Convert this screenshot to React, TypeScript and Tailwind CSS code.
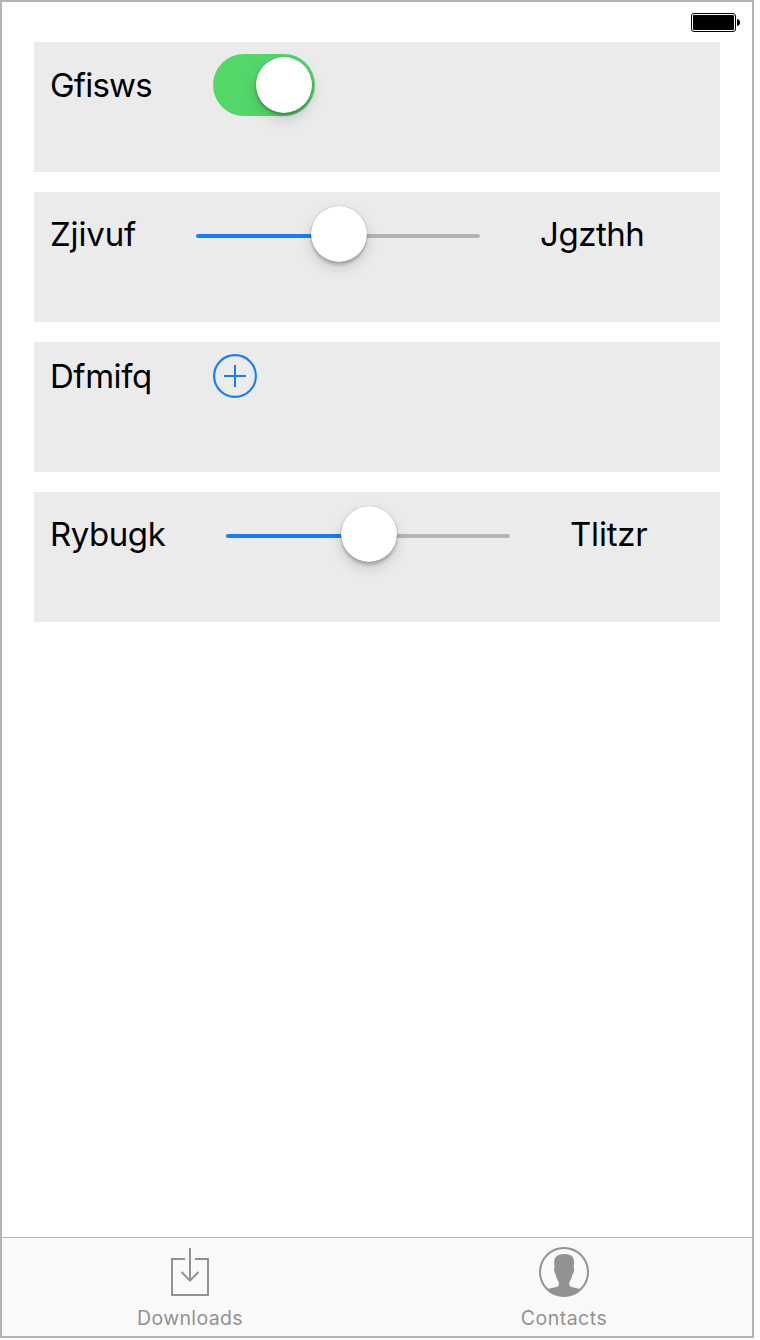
import React from "react";

const labelText = "block whitespace-nowrap text-[33px] leading-[40px] text-black";

function Battery() {
  return (
    <svg width="50" height="20" viewBox="0 0 50 20" aria-label="Battery full">
      <rect x="0.5" y="0.5" width="44" height="18" rx="2.5" fill="none" stroke="#000" />
      <rect x="2" y="2" width="41" height="15" rx="1" fill="#000" />
      <path d="M46 6c2 .3 3 1.500 3 3.500s-1 3.200-3 3.500z" fill="#000" />
    </svg>
  );
}

function Card({ children }: { children: React.ReactNode }) {
  return <section className="flex h-[130px] w-[686px] items-start bg-[#ebebeb] pl-4">{children}</section>;
}

function Slider() {
  return (
    <div className="mt-[13px] flex h-[58px] w-[284px] items-center">
      <div className="mt-1 h-1 w-[116px] rounded-l-full bg-[#157efb]" />
      <div className="relative -mx-px size-14 shrink-0 rounded-full bg-white shadow-[0_0_1px_rgba(0,0,0,0.4),0_3px_3px_rgba(0,0,0,0.2),0_6px_13px_rgba(0,0,0,0.15)]" />
      <div className="mt-1 h-1 w-[114px] rounded-r-full bg-[#b4b4b4]" />
    </div>
  );
}

function DownloadIcon() {
  return (
    <svg width="50" height="50" viewBox="0 0 50 50" fill="none" stroke="#929292" strokeWidth="2">
      <path d="M20 12H7v36h36V12H30M25 1v33M16.500 25l8.500 8.600L33.500 25" />
    </svg>
  );
}

function ContactIcon() {
  return (
    <svg width="50" height="50" viewBox="0 0 50 50">
      <circle cx="25" cy="25" r="24" fill="none" stroke="#929292" strokeWidth="2" />
      <path
        d="M8 42.300C12 41 17 40.500 19 39.300C20 38.600 19.900 36 19.500 34.300C18.100 32.800 17.200 30.500 16.800 27.700C15.600 27 14.700 22.300 15.300 20.300L15.700 20C15 16.500 14.800 13 16.500 10.500C18 8 21.500 7 25.500 7C30 7 33 8.500 34.300 11C35.500 13.500 35 17 34.500 20L35 20.300C35.500 22.300 34.700 27 33.300 27.700C32.900 30.500 32 32.800 30.600 34.300C30.200 36 30.100 38.600 31 39.300C33 40.500 38 41 42 42.300C38 47 32 49 25 49S12 47 8 42.300Z"
        fill="#929292"
      />
    </svg>
  );
}

export default function App() {
  return (
    <div className="h-[1340px] w-[760px] bg-white font-['Inter',sans-serif]">
      <div className="flex h-[1338px] w-[754px] flex-col border-2 border-[#b3b3b3] bg-white">
        <header className="flex h-10 shrink-0 justify-end pr-[11px] pt-[11px]">
          <Battery />
        </header>
        <main className="flex flex-1 flex-col gap-5 pl-8">
          <Card>
            <span className={`${labelText} mt-[23px] w-[163px] tracking-[-0.8px]`}>Gfisws</span>
            <div className="mt-3 flex h-[62px] w-[102px] items-center justify-end rounded-full bg-[#53d769] pr-[3px]">
              <div className="size-14 rounded-full bg-white shadow-[0_0_1px_rgba(0,0,0,0.2),0_2px_3px_rgba(0,0,0,0.28),0_6px_14px_rgba(0,0,0,0.16)]" />
            </div>
          </Card>
          <Card>
            <span className={`${labelText} mt-[22px] w-[146px] tracking-[-0.15px]`}>Zjivuf</span>
            <Slider />
            <span className={`${labelText} ml-[60px] mt-[22px] tracking-[-0.45px]`}>Jgzthh</span>
          </Card>
          <Card>
            <span className={`${labelText} mt-[14px] w-[163px] tracking-[-0.45px]`}>Dfmifq</span>
            <svg className="mt-3" width="44" height="44" viewBox="0 0 44 44" fill="none" stroke="#157efb" strokeWidth="2">
              <circle cx="22" cy="22" r="20.900" strokeWidth="2.200" />
              <path d="M11 22h22M22 11v22" />
            </svg>
          </Card>
          <Card>
            <span className={`${labelText} mt-[22px] w-[176px] tracking-[-0.45px]`}>Rybugk</span>
            <Slider />
            <span className={`${labelText} ml-[60px] mt-[22px] tracking-[-0.2px]`}>Tlitzr</span>
          </Card>
        </main>
        <nav className="flex h-[99px] shrink-0 border-t border-[#b2b2b2] bg-[#f9f9f9] text-[#929292]">
          <div className="flex w-[376px] flex-col items-center pt-[9px]">
            <DownloadIcon />
            <span className="mt-[9px] text-[19.500px] leading-6 tracking-[0.35px]">Downloads</span>
          </div>
          <div className="flex w-[372px] flex-col items-center pt-[9px]">
            <ContactIcon />
            <span className="mt-[9px] text-[19.500px] leading-6 tracking-[0.5px]">Contacts</span>
          </div>
        </nav>
      </div>
    </div>
  );
}
